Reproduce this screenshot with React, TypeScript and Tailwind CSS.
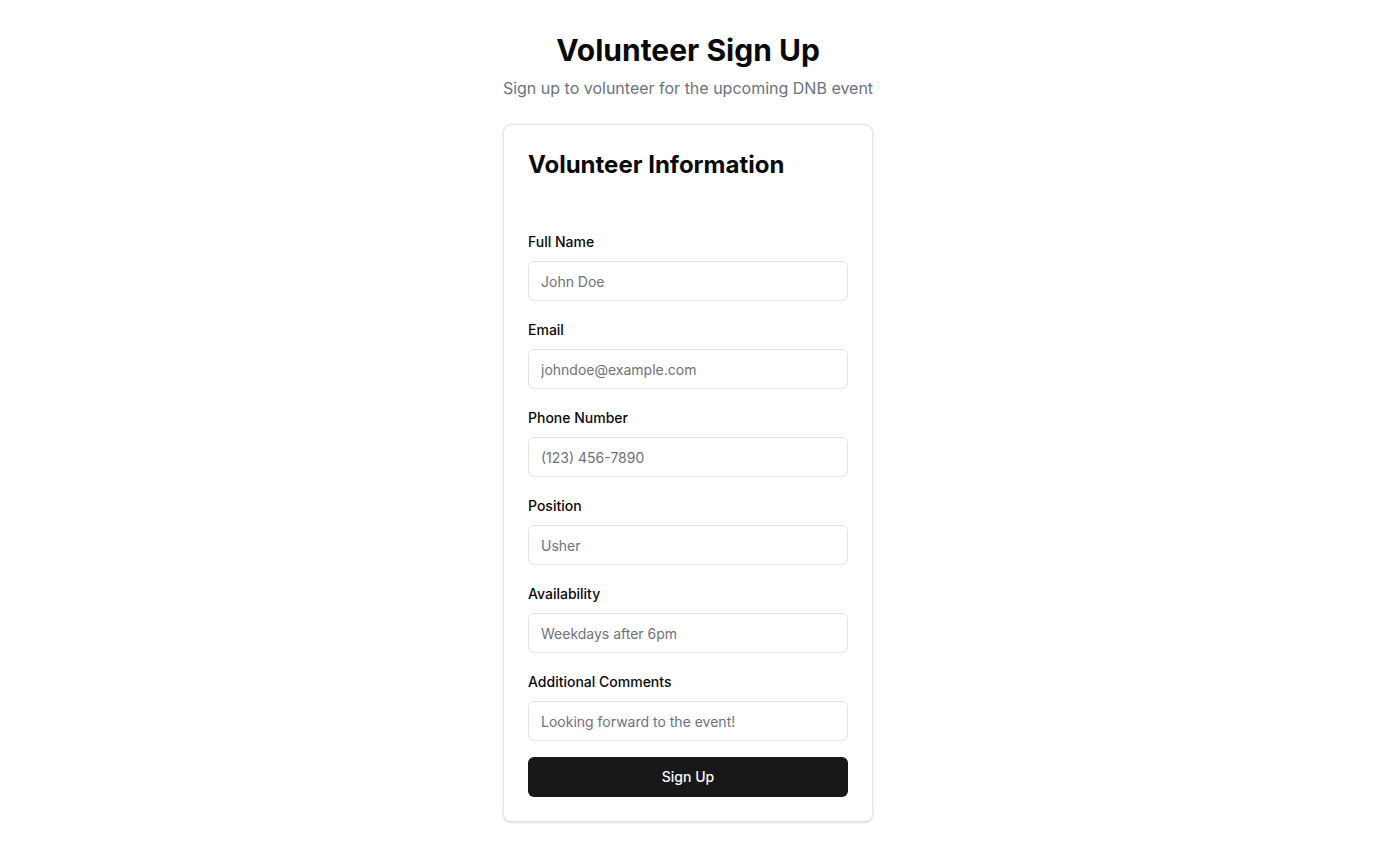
import React from "react";

const fields = [
  { label: "Full Name", placeholder: "John Doe" },
  { label: "Email", placeholder: "johndoe@example.com" },
  { label: "Phone Number", placeholder: "(123) 456-7890" },
  { label: "Position", placeholder: "Usher" },
  { label: "Availability", placeholder: "Weekdays after 6pm" },
  { label: "Additional Comments", placeholder: "Looking forward to the event!" },
];

export default function App() {
  return (
    <div
      className="min-h-screen bg-white flex flex-col items-center pt-8 text-[#09090b]"
      style={{ fontFamily: "Inter, 'Noto Sans', sans-serif" }}
    >
      <h1 className="text-3xl leading-9 font-bold">Volunteer Sign Up</h1>
      <p className="mt-2 text-base leading-6 text-[#6b7280]">
        Sign up to volunteer for the upcoming DNB event
      </p>
      <div className="mt-6 w-[370px] rounded-lg border border-[#e4e4e7] bg-white shadow-sm">
        <div className="p-6 pb-0">
          <h2 className="text-2xl leading-8 font-bold">Volunteer Information</h2>
        </div>
        <form className="px-6 pb-6 pt-[51px] flex flex-col" onSubmit={(e) => e.preventDefault()}>
          <div className="flex flex-col gap-[19px]">
            {fields.map((f) => (
              <div key={f.label} className="flex flex-col">
                <label className="text-sm leading-5 font-medium">{f.label}</label>
                <input
                  placeholder={f.placeholder}
                  className="mt-[9px] h-10 w-full rounded-md border border-[#e4e4e7] bg-white px-3 text-sm text-[#09090b] placeholder:text-[#71717a] outline-none"
                />
              </div>
            ))}
          </div>
          <button
            type="submit"
            className="mt-4 h-10 w-full rounded-md bg-[#18181b] text-sm font-medium text-[#fafafa]"
          >
            Sign Up
          </button>
        </form>
      </div>
    </div>
  );
}
